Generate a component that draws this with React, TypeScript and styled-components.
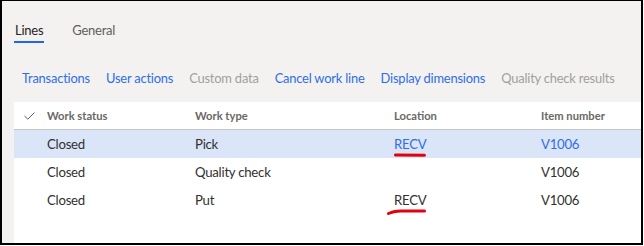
import React from "react";
import styled, { createGlobalStyle } from "styled-components";

const Global = createGlobalStyle`
  html, body { margin: 0; padding: 0; background: #ffffff; }
  * { box-sizing: border-box; }
`;

const Frame = styled.div`
  width: 643px;
  height: 245px;
  border-style: solid;
  border-color: #000000;
  border-width: 1px 2px 2px 2px;
  background: #f3f2f1;
  display: flex;
  flex-direction: column;
  font-family: "Segoe UI", Lato, sans-serif;
  overflow: hidden;
`;

const TabBar = styled.div`
  display: flex;
  gap: 27px;
  padding: 20px 0 0 12px;
  height: 43px;
`;

const Tab = styled.div<{ $active?: boolean }>`
  font-size: 13px;
  letter-spacing: -0.25px;
  line-height: 18px;
  height: 22px;
  padding: 0 1px;
  color: ${(p) => (p.$active ? "#252423" : "#605e5c")};
  border-bottom: 2px solid ${(p) => (p.$active ? "#2266e3" : "transparent")};
`;

const ActionBar = styled.div`
  display: flex;
  gap: 16px;
  padding: 25px 0 0 20px;
  height: 58px;
`;

const Action = styled.span<{ $disabled?: boolean }>`
  font-size: 12.9px;
  letter-spacing: -0.2px;
  line-height: 18px;
  color: ${(p) => (p.$disabled ? "#a19f9d" : "#2f6ee5")};
  white-space: nowrap;
`;

const Table = styled.div`
  margin-left: 12px;
  flex: 1;
  background: #ffffff;
`;

const Row = styled.div<{ $selected?: boolean; $header?: boolean }>`
  display: grid;
  grid-template-columns: 33px 148px 199px 147px 1fr;
  align-items: center;
  height: 28px;
  background: ${(p) => (p.$selected ? "#dbe5f8" : "transparent")};
  border-bottom: ${(p) => (p.$header ? "1px solid #c8c6c4" : "none")};
`;

const CheckCell = styled.div`
  display: flex;
  align-items: center;
  padding-left: 10px;
  color: #605e5c;
`;

const HeadCell = styled.div`
  font-size: 11.2px;
  font-weight: 700;
  color: #6a6866;
`;

const Cell = styled.div<{ $link?: boolean }>`
  position: relative;
  font-size: 13.2px;
  letter-spacing: -0.25px;
  color: ${(p) => (p.$link ? "#2f6ee5" : "#323130")};
  white-space: nowrap;
`;

const Mark = styled.svg`
  position: absolute;
  pointer-events: none;
  overflow: visible;
`;

const rows = [
  { status: "Closed", type: "Pick", loc: "RECV", item: "V1006", selected: true, mark: 1 },
  { status: "Closed", type: "Quality check", loc: "", item: "V1006", selected: false, mark: 0 },
  { status: "Closed", type: "Put", loc: "RECV", item: "V1006", selected: false, mark: 2 },
];

export default function App() {
  return (
    <>
      <Global />
      <Frame>
        <TabBar>
          <Tab $active>Lines</Tab>
          <Tab>General</Tab>
        </TabBar>
        <ActionBar>
          <Action>Transactions</Action>
          <Action>User actions</Action>
          <Action $disabled>Custom data</Action>
          <Action>Cancel work line</Action>
          <Action>Display dimensions</Action>
          <Action $disabled>Quality check results</Action>
        </ActionBar>
        <Table>
          <Row $header>
            <CheckCell>
              <svg width="11" height="8" viewBox="0 0 11 8">
                <path d="M0.5 4 L3.8 7.2 L10.5 0.5" fill="none" stroke="#605e5c" strokeWidth="1" />
              </svg>
            </CheckCell>
            <HeadCell>Work status</HeadCell>
            <HeadCell>Work type</HeadCell>
            <HeadCell>Location</HeadCell>
            <HeadCell>Item number</HeadCell>
          </Row>
          {rows.map((r, i) => (
            <Row key={i} $selected={r.selected}>
              <CheckCell />
              <Cell>{r.status}</Cell>
              <Cell>{r.type}</Cell>
              <Cell $link={r.selected}>
                {r.loc}
                {r.mark === 1 && (
                  <Mark width="32" height="4" style={{ left: 0, top: 17 }}>
                    <path d="M1.5 2 L30.5 2.2" stroke="#e3000f" strokeWidth="3" strokeLinecap="round" fill="none" />
                  </Mark>
                )}
                {r.mark === 2 && (
                  <Mark width="40" height="6" style={{ left: -7, top: 17 }}>
                    <path d="M1.5 4.5 Q6 2.4 14 2 L37.5 2" stroke="#e3000f" strokeWidth="3" strokeLinecap="round" fill="none" />
                  </Mark>
                )}
              </Cell>
              <Cell $link={r.selected}>{r.item}</Cell>
            </Row>
          ))}
        </Table>
      </Frame>
    </>
  );
}
